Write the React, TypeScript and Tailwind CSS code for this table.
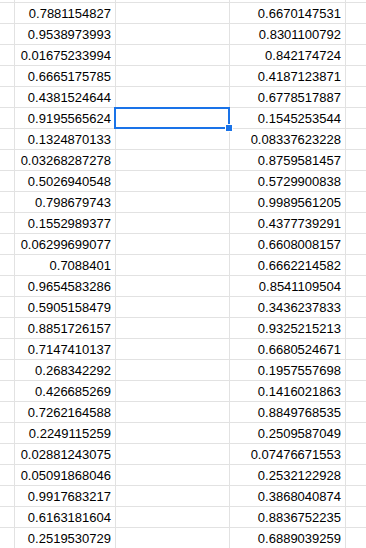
import React from "react";

const colA = [
  "0.7881154827","0.9538973993","0.01675233994","0.6665175785","0.4381524644","0.9195565624","0.1324870133","0.03268287278","0.5026940548","0.798679743","0.1552989377","0.06299699077","0.7088401","0.9654583286","0.5905158479","0.8851726157","0.7147410137","0.268342292","0.426685269","0.7262164588","0.2249115259","0.02881243075","0.05091868046","0.9917683217","0.6163181604","0.2519530729",
];
const colC = [
  "0.6670147531","0.8301100792","0.842174724","0.4187123871","0.6778517887","0.1545253544","0.08337623228","0.8759581457","0.5729900838","0.9989561205","0.4377739291","0.6608008157","0.6662214582","0.8541109504","0.3436237833","0.9325215213","0.6680524671","0.1957557698","0.1416021863","0.8849768535","0.2509587049","0.07476671553","0.2532122928","0.3868040874","0.8836752235","0.6889039259",
];

function Row({ a, c, top }: { a: string; c: string; top?: boolean }) {
  const h = top ? "h-[3px]" : "h-[21px]";
  return (
    <div className={`flex ${h} shrink-0 border-b border-[#e2e2e2]`}>
      <div className="w-[15px] shrink-0 border-r border-[#e2e2e2]" />
      <div className="w-[101px] shrink-0 border-r border-[#e2e2e2] pr-[4px] pt-[2px] text-right leading-[18px] overflow-hidden whitespace-nowrap">{a}</div>
      <div className="w-[114px] shrink-0 border-r border-[#e2e2e2]" />
      <div className="w-[116px] shrink-0 border-r border-[#e2e2e2] pr-[4px] pt-[2px] text-right leading-[18px] overflow-hidden whitespace-nowrap">{c}</div>
      <div className="flex-1" />
    </div>
  );
}

export default function App() {
  return (
    <div
      className="relative w-[366px] h-[548px] overflow-hidden bg-white text-black text-[13px]"
      style={{ fontFamily: '"Liberation Sans", Arial, sans-serif' }}
    >
      <div className="flex flex-col">
        <Row a="" c="" top />
        {colA.map((a, i) => (
          <Row key={i} a={a} c={colC[i]} />
        ))}
      </div>
      <div className="absolute left-[114px] top-[107px] w-[116px] h-[22px] border-2 border-[#1a73e8]" />
      <div className="absolute left-[226px] top-[125px] w-[6px] h-[6px] bg-[#1a73e8] outline outline-1 outline-white" />
    </div>
  );
}
